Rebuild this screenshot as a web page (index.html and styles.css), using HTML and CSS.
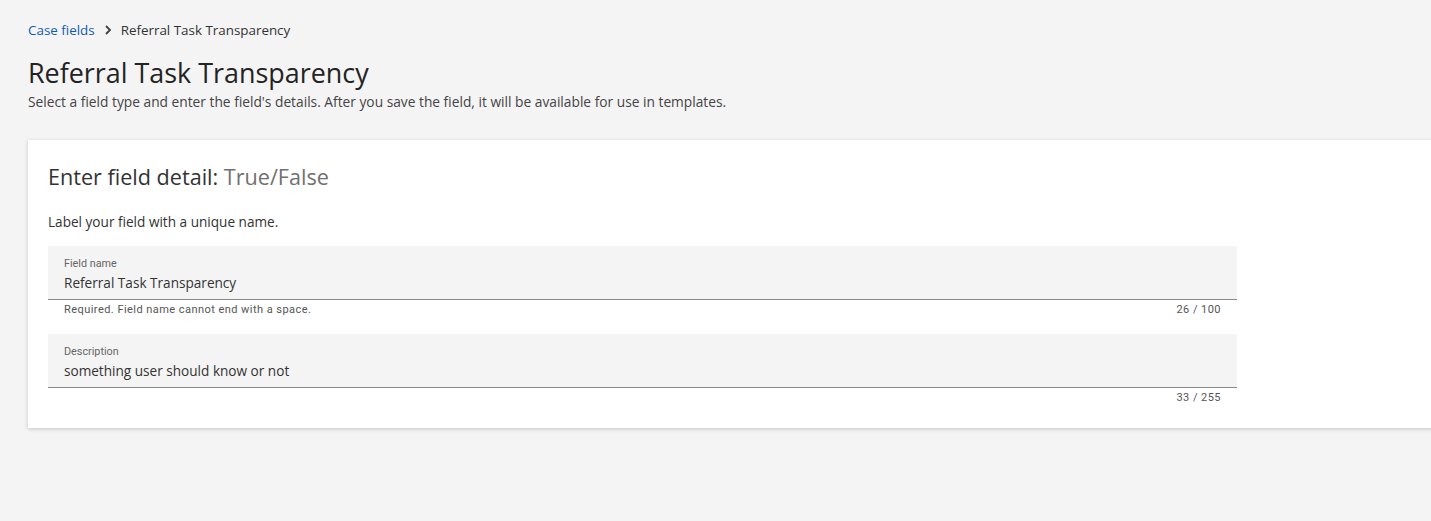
FILE: index.html
```html
<!DOCTYPE html>
<html>
<head>
<meta charset="utf-8">
<link rel="stylesheet" href="styles.css">
</head>
<body>
<div class="page">
  <nav class="crumbs">
    <a class="crumb-link" href="#">Case fields</a>
    <svg class="crumb-sep" width="8" height="10" viewBox="0 0 8 10"><path d="M2 1l4 4-4 4" fill="none" stroke="#414141" stroke-width="1.8"/></svg>
    <span class="crumb-current">Referral Task Transparency</span>
  </nav>
  <h1 class="title">Referral Task Transparency</h1>
  <p class="subtitle">Select a field type and enter the field's details. After you save the field, it will be available for use in templates.</p>
  <section class="card">
    <h2 class="card-title">Enter field detail: <span class="muted">True/False</span></h2>
    <p class="hint">Label your field with a unique name.</p>
    <div class="field">
      <div class="field-box">
        <label class="field-label">Field name</label>
        <div class="field-value">Referral Task Transparency</div>
      </div>
      <div class="field-help">
        <span>Required. Field name cannot end with a space.</span>
        <span>26 / 100</span>
      </div>
    </div>
    <div class="field">
      <div class="field-box">
        <label class="field-label">Description</label>
        <div class="field-value">something user should know or not</div>
      </div>
      <div class="field-help">
        <span></span>
        <span>33 / 255</span>
      </div>
    </div>
  </section>
</div>
</body>
</html>
```

FILE: styles.css
```css
html, body {
  margin: 0;
  padding: 0;
  background: #f4f4f4;
  overflow: hidden;
}
body {
  font-family: "Open Sans", "Noto Sans", sans-serif;
  color: #232f3e;
  width: 1431px;
  height: 521px;
}
.page {
  padding: 20px 0 0 28px;
}
.crumbs {
  display: flex;
  align-items: center;
  gap: 9px;
  font-size: 13.4px;
  height: 20px;
}
.crumb-link {
  color: #0f5bb5;
  text-decoration: none;
}
.crumb-current {
  color: #333;
}
.title {
  margin: 15px 0 0 0;
  font-weight: 400;
  font-size: 26.9px;
  line-height: 36px;
  color: #232323;
}
.subtitle {
  margin: 2px 0 0 0;
  font-size: 13.75px;
  line-height: 18px;
  color: #444;
}
.card {
  margin-top: 29px;
  width: 1420px;
  background: #fff;
  box-shadow: 0 1px 4px rgba(0,0,0,0.2);
  padding: 21px 20px 22px 20px;
  box-sizing: border-box;
}
.card-title {
  margin: 0;
  font-weight: 400;
  font-size: 21.6px;
  line-height: 32px;
  color: #333;
}
.muted {
  color: #707070;
}
.hint {
  margin: 19px 0 0 0;
  font-size: 13.6px;
  line-height: 20px;
  color: #333;
}
.field {
  width: 1189px;
  margin-top: 14px;
}
.field + .field {
  margin-top: 16px;
}
.field-box {
  background: #f4f4f4;
  border-bottom: 1px solid #8a8a8a;
  height: 54px;
  box-sizing: border-box;
  padding: 11px 16px 0 16px;
}
.field-label {
  display: block;
  font-family: Roboto, sans-serif;
  font-size: 10.8px;
  line-height: 14px;
  color: #666;
}
.field-value {
  font-size: 13.6px;
  line-height: 20px;
  margin-top: 2px;
  color: #333;
}
.field-help {
  display: flex;
  justify-content: space-between;
  padding: 2px 16px 0 16px;
  font-family: Roboto, sans-serif;
  font-size: 11px;
  letter-spacing: 0.45px;
  line-height: 16px;
  color: #555;
}
```
